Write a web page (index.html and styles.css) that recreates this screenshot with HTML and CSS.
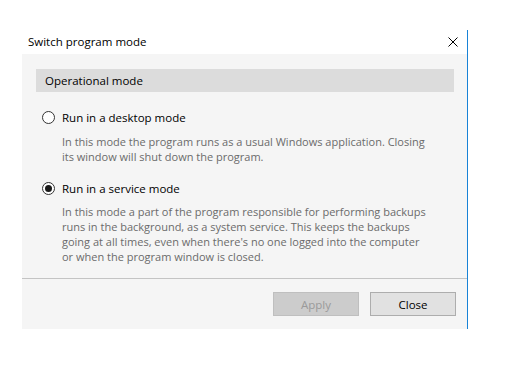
FILE: index.html
```html
<!DOCTYPE html>
<html lang="en">
<head>
  <meta charset="UTF-8">
  <title>Switch program mode</title>
  <link rel="stylesheet" href="styles.css">
</head>
<body>
  <div class="window">
    <div class="titlebar">
      <span class="title">Switch program mode</span>
      <button class="close-x" aria-label="Close">
        <svg width="10" height="10" viewBox="0 0 10 10">
          <path d="M0.5 0.5 L9.5 9.5 M9.5 0.5 L0.5 9.5" stroke="#000" stroke-width="1" fill="none"/>
        </svg>
      </button>
    </div>
    <div class="panel">
      <div class="section-head">Operational mode</div>

      <label class="option">
        <span class="radio"></span>
        <span class="option-label">Run in a desktop mode</span>
      </label>
      <p class="desc">In this mode the program runs as a usual Windows application. Closing<br>its window will shut down the program.</p>

      <label class="option second">
        <span class="radio checked"></span>
        <span class="option-label">Run in a service mode</span>
      </label>
      <p class="desc tight">In this mode a part of the program responsible for performing backups<br>runs in the background, as a system service. This keeps the backups<br>going at all times, even when there's no one logged into the computer<br>or when the program window is closed.</p>

      <div class="footer">
        <button class="btn" disabled>Apply</button>
        <button class="btn">Close</button>
      </div>
    </div>
  </div>
</body>
</html>
```

FILE: styles.css
```css
* {
  box-sizing: border-box;
  margin: 0;
  padding: 0;
}

body {
  font-family: "Open Sans", "Noto Sans", sans-serif;
  font-size: 11px;
  background: #fff;
  color: #000;
  height: 100vh;
  overflow: hidden;
}

.window {
  margin: 30px 0 0 22px;
  width: 446px;
  border-right: 1px solid #1883d7;
}

.titlebar {
  height: 24px;
  display: flex;
  align-items: center;
  justify-content: space-between;
  padding: 0 9px 0 6px;
}

.title {
  font-size: 11.5px;
  position: relative;
  top: -1px;
}

.close-x {
  border: none;
  background: transparent;
  width: 10px;
  height: 10px;
  display: flex;
}

.panel {
  background: #f5f5f5;
  height: 275px;
  padding-top: 15px;
  display: flex;
  flex-direction: column;
}

.section-head {
  margin: 0 13px 0 14px;
  height: 23px;
  background: #dcdcdc;
  padding-left: 9px;
  line-height: 23px;
  font-size: 11.5px;
}

.option {
  display: flex;
  align-items: center;
  gap: 7px;
  margin: 17px 0 0 20px;
  height: 16px;
  font-size: 11.5px;
}

.option.second {
  margin-top: 16px;
}

.radio {
  width: 13px;
  height: 13px;
  border: 1px solid #333;
  border-radius: 50%;
  background: #fff;
  display: flex;
  align-items: center;
  justify-content: center;
}

.radio.checked::after {
  content: "";
  width: 7px;
  height: 7px;
  border-radius: 50%;
  background: #1a1a1a;
}

.desc {
  margin: 9px 0 0 40px;
  line-height: 15px;
  color: #6b6b6b;
}

.desc.tight {
  margin-top: 8px;
}

.footer {
  margin-top: auto;
  border-top: 1px solid #c4c4c4;
  height: 51px;
  display: flex;
  justify-content: flex-end;
  align-items: flex-start;
  gap: 11px;
  padding: 13px 11px 0 0;
}

.btn {
  width: 86px;
  height: 24px;
  font-family: inherit;
  font-size: 11.5px;
  background: #e1e1e1;
  border: 1px solid #adadad;
  color: #000;
}

.btn:disabled {
  background: #cccccc;
  border-color: #bfbfbf;
  color: #9a9a9a;
}
```
